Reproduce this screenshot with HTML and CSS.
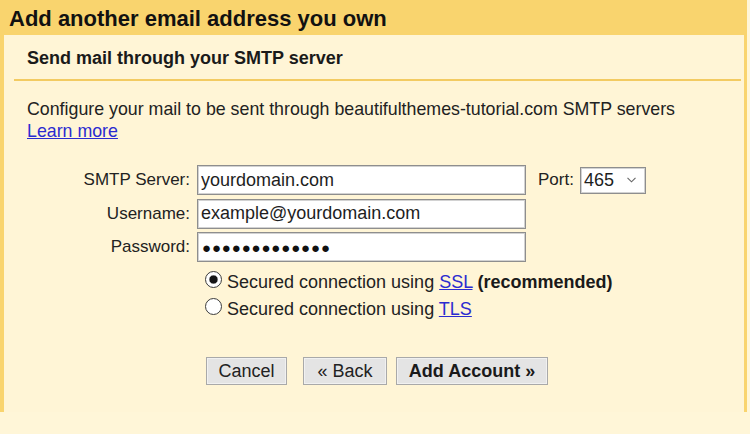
FILE: index.html
```html
<!DOCTYPE html>
<html lang="en">
<head>
<meta charset="utf-8">
<title>Add another email address you own</title>
<link rel="stylesheet" href="styles.css">
</head>
<body>
<div class="dialog">
  <h1 class="title">Add another email address you own</h1>
  <div class="panel">
    <h2 class="subtitle">Send mail through your SMTP server</h2>
    <div class="sep"></div>
    <p class="desc">Configure your mail to be sent through beautifulthemes-tutorial.com SMTP servers<br><a href="#" class="link">Learn more</a></p>

    <div class="form">
      <label class="label" for="smtp">SMTP Server:</label>
      <input class="field" id="smtp" type="text" value="yourdomain.com">
      <div class="port">
        <span class="port-label">Port:</span>
        <div class="select">
          <span>465</span>
          <svg class="chev" width="9" height="6" viewBox="0 0 9 6"><polyline points="0.5,0.8 4.5,4.8 8.5,0.8" fill="none" stroke="#666" stroke-width="1.1"/></svg>
        </div>
      </div>
      <label class="label" for="user">Username:</label>
      <input class="field" id="user" type="text" value="example@yourdomain.com">
      <span></span>
      <label class="label" for="pass">Password:</label>
      <input class="field pw" id="pass" type="text" value="●●●●●●●●●●●●●" readonly>
      <span></span>
    </div>

    <div class="radios">
      <label class="radio-row"><input type="radio" name="sec" class="radio" checked><span>Secured connection using <a href="#" class="link">SSL</a> <b>(recommended)</b></span></label>
      <label class="radio-row"><input type="radio" name="sec" class="radio"><span>Secured connection using <a href="#" class="link">TLS</a></span></label>
    </div>

    <div class="buttons">
      <button class="btn btn-cancel">Cancel</button>
      <button class="btn btn-back">« Back</button>
      <button class="btn btn-add">Add Account »</button>
    </div>
  </div>
</div>
</body>
</html>
```

FILE: styles.css
```css
html, body {
  margin: 0;
  padding: 0;
}
body {
  background: #fff6d8;
  font-family: "Liberation Sans", Arial, sans-serif;
  color: #1e1e1e;
  width: 750px;
  height: 434px;
  overflow: hidden;
}
.dialog {
  width: 740px;
  background: #f9d46e;
  padding: 0 3px 0 4px;
}
.title {
  margin: 0;
  padding: 2px 0 0 5px;
  font-size: 22px;
  line-height: 33px;
  font-weight: bold;
  color: #111;
  white-space: nowrap;
}
.panel {
  background: #fff5d6;
  padding-bottom: 27px;
}
.subtitle {
  margin: 0;
  padding: 12px 0 0 23px;
  font-size: 18px;
  line-height: 22px;
  font-weight: bold;
  color: #1a1a1a;
}
.sep {
  height: 2px;
  background: #f3cb62;
  margin: 10px 3px 0 10px;
}
.desc {
  margin: 17px 0 0 0;
  padding-left: 23px;
  font-size: 17.8px;
  line-height: 22px;
  color: #222;
  white-space: nowrap;
}
.link {
  color: #2b2bd0;
  text-decoration: underline;
}
.form {
  margin-top: 23px;
  display: grid;
  grid-template-columns: 186px 329px auto;
  grid-auto-rows: 30px;
  column-gap: 7px;
  row-gap: 3.5px;
  align-items: center;
}
.label {
  text-align: right;
  font-size: 17px;
  color: #222;
  white-space: nowrap;
}
.field {
  box-sizing: border-box;
  height: 30px;
  width: 329px;
  margin: 0;
  padding: 0 3px;
  border: 1px solid #8e8e8e;
  box-shadow: inset 0 0 0 1px #d2d2d2;
  border-radius: 0;
  background: #fff;
  font-family: "Liberation Sans", Arial, sans-serif;
  font-size: 18px;
  color: #1e1e1e;
  outline: none;
}
.pw {
  font-size: 15px;
  letter-spacing: 0.85px;
  padding-left: 4px;
  color: #111;
}
.port {
  display: flex;
  align-items: center;
  margin-left: 5px;
  gap: 6px;
}
.port-label {
  font-size: 17px;
  color: #222;
}
.select {
  box-sizing: border-box;
  width: 66px;
  height: 27px;
  display: flex;
  align-items: center;
  padding: 0 9px 0 3px;
  border: 1px solid #8e8e8e;
  box-shadow: inset 0 0 0 1px #d2d2d2;
  background: #fff;
  font-size: 18px;
  color: #1e1e1e;
}
.chev {
  margin-left: auto;
}
.radios {
  margin: 6.5px 0 0 201px;
  display: flex;
  flex-direction: column;
}
.radio-row {
  display: flex;
  align-items: flex-start;
  height: 27px;
  line-height: 27px;
  font-size: 18px;
  color: #222;
  white-space: nowrap;
}
.radio-row b {
  color: #1a1a1a;
}
.radio {
  appearance: none;
  -webkit-appearance: none;
  box-sizing: border-box;
  width: 17px;
  height: 17px;
  margin: 2px 5px 0 0;
  border: 1.5px solid #3c3c3c;
  border-radius: 50%;
  background: #fff;
  flex: none;
}
.radio:checked {
  background: radial-gradient(circle, #151515 0 3.6px, #9a9a9a 4.2px, #fff 5px);
}
.buttons {
  margin: 34.5px 0 0 202px;
  display: flex;
}
.btn {
  box-sizing: border-box;
  height: 28px;
  padding: 0 11px;
  margin: 0;
  border: 1px solid #a9a9a9;
  box-shadow: inset 0 0 0 1px #f1f1f1;
  background: #e4e4e4;
  border-radius: 0;
  font-family: "Liberation Sans", Arial, sans-serif;
  font-size: 18px;
  color: #222;
}
.btn-cancel {
  width: 81px;
  margin-right: 16px;
}
.btn-back {
  width: 84px;
  margin-right: 9px;
}
.btn-add {
  width: 152px;
  font-weight: bold;
  color: #1a1a1a;
}
```
